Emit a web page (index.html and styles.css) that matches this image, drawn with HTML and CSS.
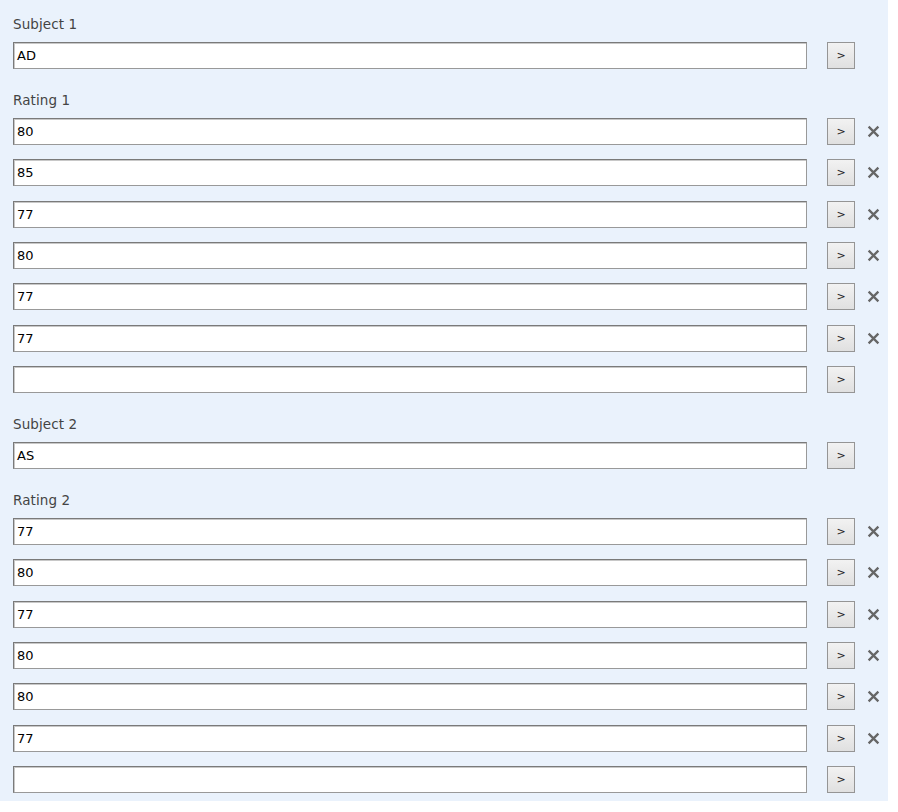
FILE: index.html
```html
<!DOCTYPE html>
<html>
<head>
<meta charset="utf-8">
<link rel="stylesheet" href="styles.css">
</head>
<body>
<div class="panel">
  <div class="label">Subject 1</div>
  <div class="row"><div class="input">AD</div><button class="go">&gt;</button></div>

  <div class="label">Rating 1</div>
  <div class="row"><div class="input">80</div><button class="go">&gt;</button><span class="del"><svg viewBox="0 0 12 12"><path d="M1.5 1.5L10.5 10.5M10.5 1.5L1.5 10.5"/></svg></span></div>
  <div class="row"><div class="input">85</div><button class="go">&gt;</button><span class="del"><svg viewBox="0 0 12 12"><path d="M1.5 1.5L10.5 10.5M10.5 1.5L1.5 10.5"/></svg></span></div>
  <div class="row"><div class="input">77</div><button class="go">&gt;</button><span class="del"><svg viewBox="0 0 12 12"><path d="M1.5 1.5L10.5 10.5M10.5 1.5L1.5 10.5"/></svg></span></div>
  <div class="row"><div class="input">80</div><button class="go">&gt;</button><span class="del"><svg viewBox="0 0 12 12"><path d="M1.5 1.5L10.5 10.5M10.5 1.5L1.5 10.5"/></svg></span></div>
  <div class="row"><div class="input">77</div><button class="go">&gt;</button><span class="del"><svg viewBox="0 0 12 12"><path d="M1.5 1.5L10.5 10.5M10.5 1.5L1.5 10.5"/></svg></span></div>
  <div class="row"><div class="input">77</div><button class="go">&gt;</button><span class="del"><svg viewBox="0 0 12 12"><path d="M1.5 1.5L10.5 10.5M10.5 1.5L1.5 10.5"/></svg></span></div>
  <div class="row"><div class="input"></div><button class="go">&gt;</button></div>

  <div class="label">Subject 2</div>
  <div class="row"><div class="input">AS</div><button class="go">&gt;</button></div>

  <div class="label">Rating 2</div>
  <div class="row"><div class="input">77</div><button class="go">&gt;</button><span class="del"><svg viewBox="0 0 12 12"><path d="M1.5 1.5L10.5 10.5M10.5 1.5L1.5 10.5"/></svg></span></div>
  <div class="row"><div class="input">80</div><button class="go">&gt;</button><span class="del"><svg viewBox="0 0 12 12"><path d="M1.5 1.5L10.5 10.5M10.5 1.5L1.5 10.5"/></svg></span></div>
  <div class="row"><div class="input">77</div><button class="go">&gt;</button><span class="del"><svg viewBox="0 0 12 12"><path d="M1.5 1.5L10.5 10.5M10.5 1.5L1.5 10.5"/></svg></span></div>
  <div class="row"><div class="input">80</div><button class="go">&gt;</button><span class="del"><svg viewBox="0 0 12 12"><path d="M1.5 1.5L10.5 10.5M10.5 1.5L1.5 10.5"/></svg></span></div>
  <div class="row"><div class="input">80</div><button class="go">&gt;</button><span class="del"><svg viewBox="0 0 12 12"><path d="M1.5 1.5L10.5 10.5M10.5 1.5L1.5 10.5"/></svg></span></div>
  <div class="row"><div class="input">77</div><button class="go">&gt;</button><span class="del"><svg viewBox="0 0 12 12"><path d="M1.5 1.5L10.5 10.5M10.5 1.5L1.5 10.5"/></svg></span></div>
  <div class="row"><div class="input"></div><button class="go">&gt;</button></div>
</div>
</body>
</html>
```

FILE: styles.css
```css
html, body {
  margin: 0;
  padding: 0;
  background: #ffffff;
}
.panel {
  width: 888px;
  box-sizing: border-box;
  background: #eaf2fc;
  padding: 16px 0 8px 13px;
  font-family: "DejaVu Sans", Verdana, sans-serif;
}
.label {
  height: 16px;
  line-height: 16px;
  font-size: 13.5px;
  color: #444;
  margin-bottom: 10px;
  letter-spacing: 0.1px;
}
.row + .label {
  margin-top: 23px;
}
.row {
  display: flex;
  align-items: center;
  height: 27px;
}
.row + .row {
  margin-top: 14.33px;
}
.input {
  width: 794px;
  height: 27px;
  box-sizing: border-box;
  background: #fff;
  border: 1px solid #999;
  border-top-color: #7a7a7a;
  border-left-color: #7a7a7a;
  box-shadow: inset 1px 1px 0 #c8c8c8;
  font-size: 13px;
  line-height: 25px;
  padding-left: 3px;
  color: #000;
}
.go {
  margin-left: 20px;
  width: 28px;
  height: 27px;
  box-sizing: border-box;
  border: 1px solid #959595;
  background: linear-gradient(#f2f2f2, #e0e0e0);
  font-family: "DejaVu Sans", sans-serif;
  font-size: 11px;
  color: #222;
  padding: 0;
  line-height: 25px;
}
.del {
  margin-left: 12px;
  width: 13px;
  height: 13px;
  display: flex;
}
.del svg {
  width: 13px;
  height: 13px;
  stroke: #666;
  stroke-width: 2.1;
  fill: none;
}
```
